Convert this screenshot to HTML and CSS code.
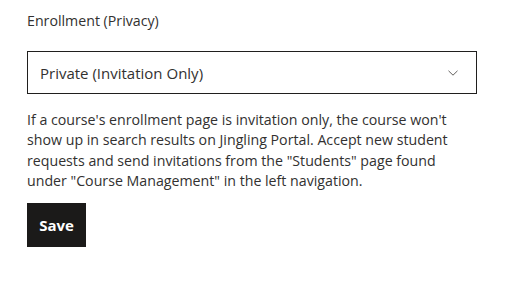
FILE: index.html
```html
<!DOCTYPE html>
<html lang="en">
<head>
<meta charset="utf-8">
<title>Enrollment</title>
<link rel="stylesheet" href="styles.css">
</head>
<body>
<div class="panel">
  <label class="field-label">Enrollment (Privacy)</label>
  <div class="select">
    <span class="select-value">Private (Invitation Only)</span>
    <svg class="chevron" width="10" height="6" viewBox="0 0 10 6"><path d="M0.5 0.8 L5 5.2 L9.5 0.8" fill="none" stroke="#605e5c" stroke-width="1"/></svg>
  </div>
  <p class="help">If a course's enrollment page is invitation only, the course won't show up in search results on Jingling Portal. Accept new student requests and send invitations from the "Students" page found under "Course Management" in the left navigation.</p>
  <button class="save">Save</button>
</div>
</body>
</html>
```
FILE: styles.css
```css
html,body{margin:0;padding:0;background:#fff;}
body{font-family:"Open Sans","Noto Sans",sans-serif;color:#323130;}
.panel{padding:11px 0 0 27px;width:450px;display:flex;flex-direction:column;align-items:flex-start;}
.field-label{font-size:14.2px;line-height:20px;display:block;}
.select{margin-top:20px;box-sizing:border-box;width:450px;height:43px;border:1px solid #201f1e;display:flex;align-items:center;justify-content:space-between;padding:0 18px 0 12px;}
.select-value{font-size:15px;line-height:20px;}
.chevron{display:block;}
.help{margin:16px 0 0 0;font-size:14.2px;line-height:20.3px;width:440px;}
.save{margin-top:12px;width:59px;height:44px;border:none;background:#1b1a19;color:#fff;font-family:"Open Sans",sans-serif;font-weight:700;font-size:15px;padding:0;}
```
